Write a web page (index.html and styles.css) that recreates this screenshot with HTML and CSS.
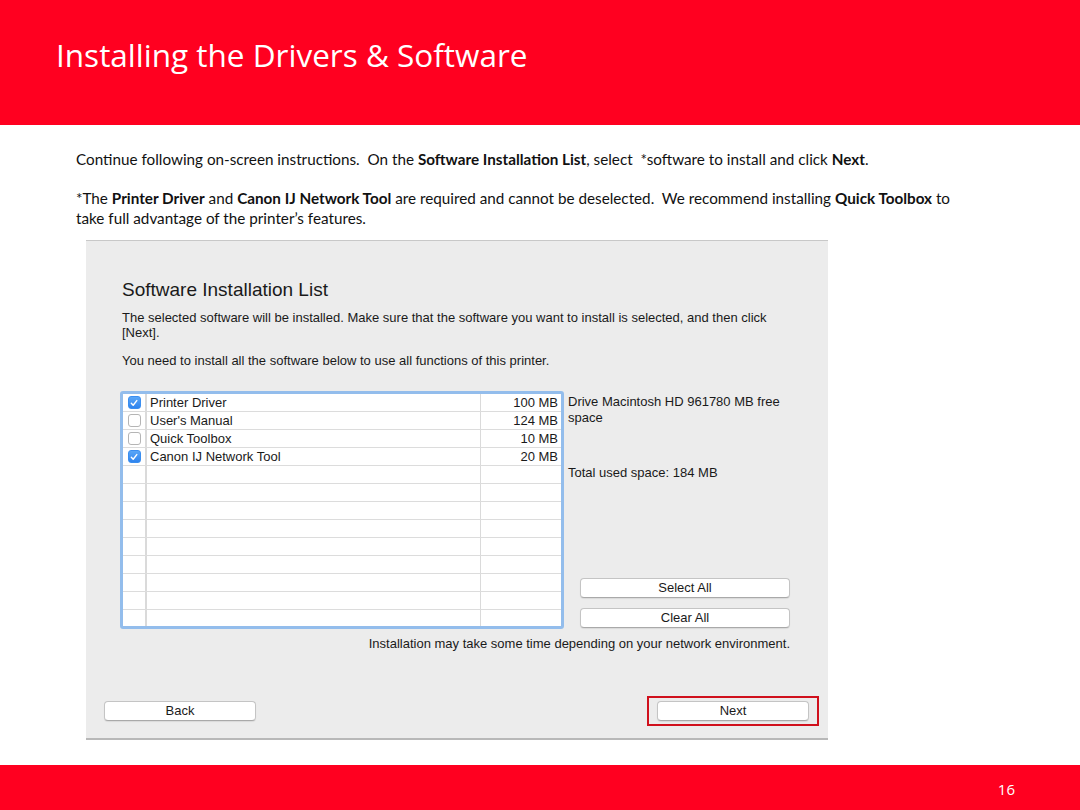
FILE: index.html
```html
<!DOCTYPE html>
<html>
<head>
<meta charset="utf-8">
<link rel="stylesheet" href="styles.css">
</head>
<body>
<div class="slide">
  <header class="top">
    <h1 class="title">Installing the Drivers &amp; Software</h1>
  </header>
  <main class="content">
    <p class="intro">Continue following on-screen instructions.&nbsp; On the <b>Software Installation List</b>, select &nbsp;*software to install and click <b>Next</b>.</p>
    <p class="note">*The <b>Printer Driver</b> and <b>Canon IJ Network Tool</b> are required and cannot be deselected.&nbsp; We recommend installing <b>Quick Toolbox</b> to take full advantage of the printer’s features.</p>
    <div class="shot">
      <h2 class="shot-title">Software Installation List</h2>
      <p class="shot-p1">The selected software will be installed. Make sure that the software you want to install is selected, and then click [Next].</p>
      <p class="shot-p2">You need to install all the software below to use all functions of this printer.</p>
      <div class="work">
        <div class="listbox">
          <div class="row"><span class="c-chk"><span class="chk on"><svg viewBox="0 0 10 10"><path d="M2.3 5.2 L4.2 7.2 L7.8 2.6" fill="none" stroke="#fff" stroke-width="1.4" stroke-linecap="round" stroke-linejoin="round"/></svg></span></span><span class="c-name">Printer Driver</span><span class="c-size">100 MB</span></div>
          <div class="row"><span class="c-chk"><span class="chk"></span></span><span class="c-name">User's Manual</span><span class="c-size">124 MB</span></div>
          <div class="row"><span class="c-chk"><span class="chk"></span></span><span class="c-name">Quick Toolbox</span><span class="c-size">10 MB</span></div>
          <div class="row"><span class="c-chk"><span class="chk on"><svg viewBox="0 0 10 10"><path d="M2.3 5.2 L4.2 7.2 L7.8 2.6" fill="none" stroke="#fff" stroke-width="1.4" stroke-linecap="round" stroke-linejoin="round"/></svg></span></span><span class="c-name">Canon IJ Network Tool</span><span class="c-size">20 MB</span></div>
          <div class="row"><span class="c-chk"></span><span class="c-name"></span><span class="c-size"></span></div>
          <div class="row"><span class="c-chk"></span><span class="c-name"></span><span class="c-size"></span></div>
          <div class="row"><span class="c-chk"></span><span class="c-name"></span><span class="c-size"></span></div>
          <div class="row"><span class="c-chk"></span><span class="c-name"></span><span class="c-size"></span></div>
          <div class="row"><span class="c-chk"></span><span class="c-name"></span><span class="c-size"></span></div>
          <div class="row"><span class="c-chk"></span><span class="c-name"></span><span class="c-size"></span></div>
          <div class="row"><span class="c-chk"></span><span class="c-name"></span><span class="c-size"></span></div>
          <div class="row"><span class="c-chk"></span><span class="c-name"></span><span class="c-size"></span></div>
          <div class="row last"><span class="c-chk"></span><span class="c-name"></span><span class="c-size"></span></div>
        </div>
        <div class="side">
          <p class="drive">Drive Macintosh HD 961780 MB free space</p>
          <p class="total">Total used space: 184 MB</p>
          <div class="side-btns">
            <div class="mbtn wide">Select All</div>
            <div class="mbtn wide">Clear All</div>
          </div>
        </div>
      </div>
      <p class="time">Installation may take some time depending on your network environment.</p>
      <div class="nav">
        <div class="mbtn navbtn">Back</div>
        <div class="next-wrap"><div class="mbtn navbtn">Next</div></div>
      </div>
    </div>
  </main>
  <footer class="bottom">
    <span class="page">16</span>
  </footer>
</div>
</body>
</html>
```
FILE: styles.css
```css
html, body {
  margin: 0;
  padding: 0;
  background: #ffffff;
}
.slide {
  width: 1080px;
  height: 810px;
  display: flex;
  flex-direction: column;
  overflow: hidden;
  font-family: Lato, "Open Sans", sans-serif;
}
.top {
  height: 125px;
  background: #ff0020;
  display: flex;
  align-items: flex-start;
}
.title {
  margin: 34px 0 0 56px;
  color: #ffffff;
  font-family: "Open Sans", sans-serif;
  font-weight: 400;
  font-size: 31.5px;
  line-height: 42px;
  letter-spacing: 0;
}
.content {
  flex: 1;
  display: flex;
  flex-direction: column;
  padding-left: 76px;
}
.intro, .note {
  margin: 0;
  font-size: 15.25px;
  line-height: 20px;
  color: #111;
  width: 900px;
}
.intro { margin-top: 24px; }
.note { margin-top: 19px; }
.intro b, .note b { font-weight: 700; }

.shot {
  margin: 12px 0 0 10px;
  width: 742px;
  height: 500px;
  box-sizing: border-box;
  background: #ececec;
  border-top: 1px solid #c8c8c8;
  border-bottom: 2px solid #b8b8b8;
  font-family: "Liberation Sans", Arial, sans-serif;
  color: #1a1a1a;
  display: flex;
  flex-direction: column;
}
.shot-title {
  margin: 38px 0 0 36px;
  font-size: 19px;
  font-weight: 400;
  line-height: 22px;
  letter-spacing: 0;
}
.shot-p1 {
  margin: 9px 0 0 36px;
  width: 660px;
  font-size: 13px;
  line-height: 15px;
}
.shot-p2 {
  margin: 13px 0 0 36px;
  font-size: 13px;
  line-height: 15px;
}
.work {
  margin: 23px 0 0 34px;
  display: flex;
}
.listbox {
  width: 444px;
  height: 238px;
  box-sizing: border-box;
  border: 3px solid #93bdec;
  border-radius: 3px;
  background: #fff;
  display: flex;
  flex-direction: column;
  overflow: hidden;
}
.row {
  height: 18px;
  flex: none;
  display: grid;
  grid-template-columns: 24px 334px 1fr;
  border-bottom: 1px solid #dcdcdc;
  box-sizing: border-box;
  font-size: 13px;
  line-height: 17px;
}
.row.last { border-bottom: none; }
.c-chk {
  border-right: 2px solid #dadada;
  display: flex;
  align-items: center;
  justify-content: center;
}
.c-name {
  border-right: 1px solid #dadada;
  padding-left: 3px;
}
.c-size {
  text-align: right;
  padding-right: 3px;
}
.chk {
  width: 13px;
  height: 13px;
  box-sizing: border-box;
  border: 1px solid #b5b5b5;
  border-radius: 3px;
  background: #fff;
  display: flex;
  align-items: center;
  justify-content: center;
}
.chk.on {
  border-color: #3a8ef0;
  background: linear-gradient(#5aa6f7, #2f84ee);
}
.chk svg { width: 10px; height: 10px; }
.side {
  margin-left: 4px;
  width: 226px;
  display: flex;
  flex-direction: column;
}
.drive {
  margin: 3px 0 0 0;
  font-size: 13px;
  line-height: 16px;
  width: 222px;
}
.total {
  margin: 39px 0 0 0;
  font-size: 13px;
  line-height: 16px;
}
.side-btns {
  margin: 97px 0 0 12px;
  display: flex;
  flex-direction: column;
  gap: 10px;
}
.mbtn {
  height: 20px;
  box-sizing: border-box;
  background: #fff;
  border: 1px solid #c4c4c4;
  border-bottom-color: #a9a9a9;
  border-radius: 4px;
  box-shadow: 0 1px 1px rgba(0,0,0,0.08);
  text-align: center;
  font-size: 13px;
  line-height: 18px;
  color: #1a1a1a;
}
.wide { width: 210px; }
.time {
  margin: 7px 38px 0 0;
  align-self: flex-end;
  font-size: 13px;
  line-height: 16px;
}
.nav {
  margin: 44px 0 0 18px;
  width: 705px;
  display: flex;
  justify-content: space-between;
  align-items: center;
}
.navbtn { width: 152px; }
.next-wrap {
  border: 2px solid #d0101c;
  padding: 3px 8px 3px 8px;
  margin-right: -10px;
}
.bottom {
  height: 45px;
  margin-top: auto;
  background: #ff0020;
  display: flex;
  justify-content: flex-end;
  align-items: center;
}
.page {
  color: #fff;
  font-family: "Open Sans", sans-serif;
  font-size: 15px;
  margin-right: 65px;
  margin-top: 3px;
}
```
